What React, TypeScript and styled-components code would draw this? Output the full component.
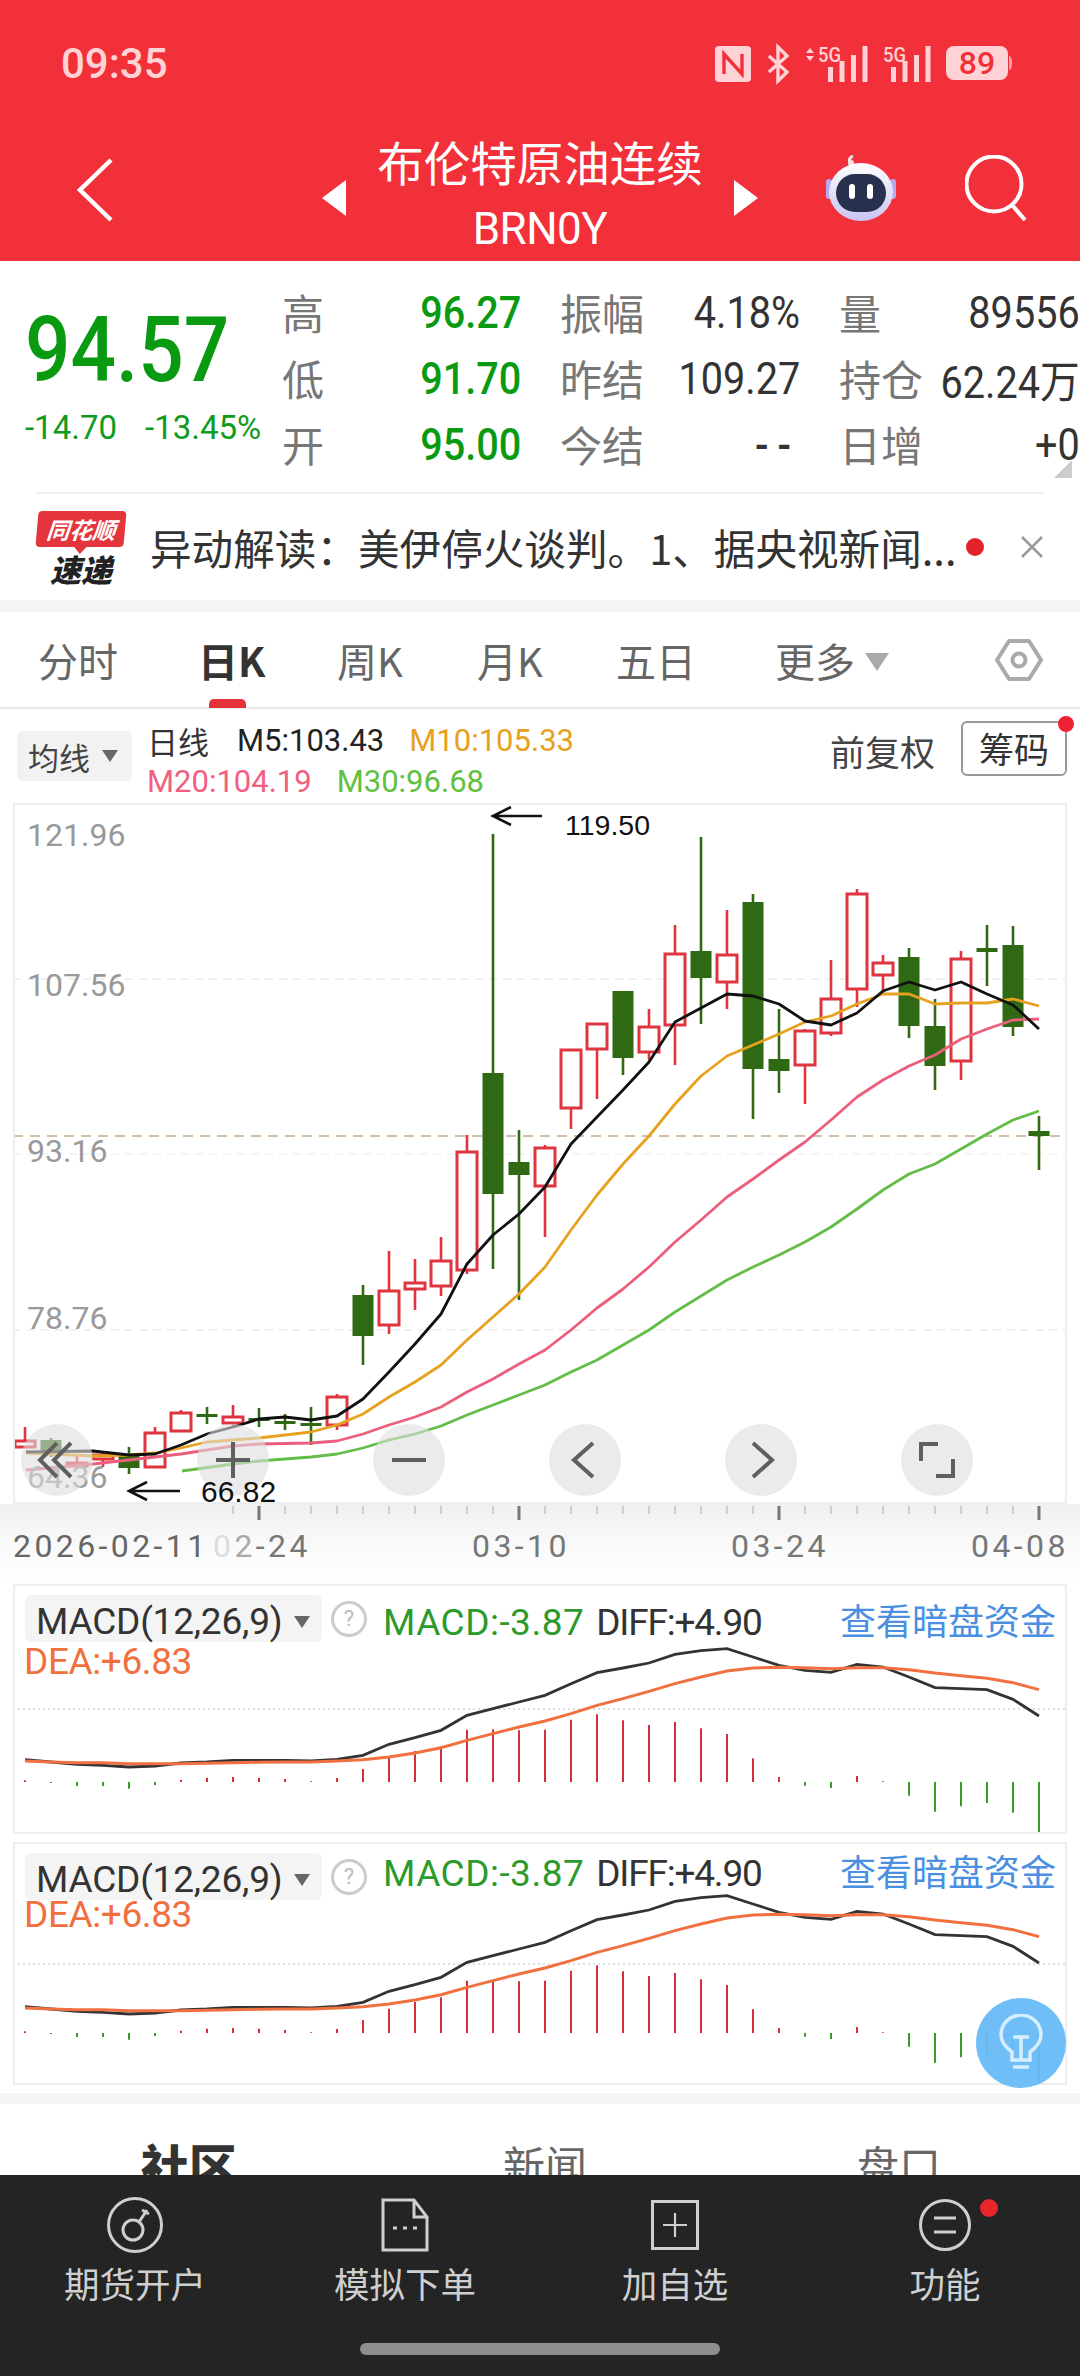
import React from "react";
import styled, { createGlobalStyle } from "styled-components";

const RED = "#f23039";
const FONT = `Roboto, "Noto Sans CJK SC", sans-serif`;
const CJK = `"Noto Sans CJK SC", Roboto, sans-serif`;

const GlobalStyle = createGlobalStyle`
  html, body {
    margin: 0;
    padding: 0;
    background: white;
  }
  * {
    box-sizing: border-box;
  }
`;

const Page = styled.div`
  width: 1080px;
  height: 2376px;
  overflow: hidden;
  display: flex;
  flex-direction: column;
  background: white;
  font-family: ${FONT};
  position: relative;
`;

const Scroller = styled.div`
  flex: 1 1 auto;
  overflow: hidden;
`;

/* ---------- red header ---------- */

const Header = styled.div`
  height: 264px;
  background: ${RED};
  display: flex;
  flex-direction: column;
`;

const StatusBar = styled.div`
  height: 126px;
  padding: 46px 68px 0 61px;
  display: flex;
  align-items: flex-start;
`;

const Clock = styled.div`
  font-size: 42px;
  font-weight: 500;
  line-height: 36px;
  color: #ffd3d5;
  flex: 1;
`;

const StatusIcons = styled.div`
  display: flex;
  align-items: flex-start;
  svg {
    overflow: visible;
  }
`;

const NavBar = styled.div`
  flex: 1;
  display: flex;
  position: relative;
  align-items: flex-start;
`;

const BackIcon = styled.svg`
  margin: 32px 0 0 76px;
  width: 38px;
  height: 64px;
`;

const TitleBlock = styled.div`
  position: absolute;
  left: 322px;
  width: 436px;
  top: 10px;
  display: flex;
  align-items: center;
  justify-content: space-between;
`;

const TitleText = styled.div`
  text-align: center;
  color: white;
  display: flex;
  flex-direction: column;
  align-items: center;
`;

const TitleName = styled.div`
  font-family: ${CJK};
  font-size: 46.5px;
  line-height: 50px;
`;

const TitleCode = styled.div`
  font-size: 44px;
  line-height: 50px;
  margin-top: 18px;
  letter-spacing: -0.5px;
`;

const TitleArrow = styled.div<{ $dir: "left" | "right" }>`
  width: 0;
  height: 0;
  margin-top: 6px;
  border-top: 18px solid transparent;
  border-bottom: 18px solid transparent;
  ${(p) => (p.$dir === "left" ? "border-right: 24px solid white;" : "border-left: 24px solid white;")}
`;

const NavRight = styled.div`
  margin-left: auto;
  padding: 29px 53px 0 0;
  display: flex;
  align-items: flex-start;
  gap: 68px;
`;

/* ---------- quote block ---------- */

const Quote = styled.div`
  height: 231px;
  padding-top: 17px;
  display: flex;
  position: relative;
`;

const PriceCol = styled.div`
  width: 282px;
  padding-left: 25px;
`;

const MainPrice = styled.div`
  font-size: 90px;
  font-weight: 500;
  line-height: 100px;
  margin-top: 23px;
  transform: scaleX(0.89);
  transform-origin: left center;
  color: #0a9a12;
`;

const PriceChange = styled.div`
  display: flex;
  gap: 28px;
  margin-top: 7px;
  font-size: 33px;
  line-height: 40px;
  color: #109a20;
`;

const StatGrid = styled.div`
  display: grid;
  grid-template-columns: 239px 240px 241px;
  grid-auto-rows: 66px;
  column-gap: 39px;
  flex: 1;
`;

const Stat = styled.div`
  display: flex;
  align-items: center;
  justify-content: space-between;
`;

const StatLabel = styled.span`
  font-family: ${CJK};
  font-size: 42px;
  color: #777;
  white-space: nowrap;
`;

const StatValue = styled.span<{ $green?: boolean; $empty?: boolean }>`
  display: inline-block;
  padding-top: 3px;
  font-size: 44px;
  font-weight: ${(p) => (p.$green || p.$empty ? 500 : 400)};
  letter-spacing: ${(p) => (p.$empty ? 10 : 0)}px;
  transform: scaleX(0.9);
  transform-origin: right center;
  color: ${(p) => (p.$green ? "#0a9a12" : "#333")};
  white-space: nowrap;
`;

const CornerMark = styled.div`
  position: absolute;
  right: 8px;
  top: 199px;
  width: 0;
  height: 0;
  border-left: 18px solid transparent;
  border-bottom: 18px solid #ccc;
`;

/* ---------- news ticker ---------- */

const NewsRow = styled.div`
  height: 108px;
  margin: 0 36px;
  border-top: 2px solid #efefef;
  display: flex;
  align-items: center;
`;

const Logo = styled.div`
  width: 90px;
  display: flex;
  flex-direction: column;
  align-items: center;
  margin-top: 0;
`;

const LogoBadge = styled.div`
  width: 88px;
  height: 36px;
  background: #e5353c;
  border-radius: 4px;
  transform: skewX(-5deg);
  color: white;
  font-family: ${CJK};
  font-size: 23px;
  font-weight: 700;
  font-style: italic;
  line-height: 36px;
  text-align: center;
  position: relative;
  &::after {
    content: "";
    position: absolute;
    left: 38px;
    bottom: -7px;
    border-left: 7px solid transparent;
    border-right: 7px solid transparent;
    border-top: 8px solid #e5353c;
  }
`;

const LogoText = styled.div`
  font-family: ${CJK};
  font-size: 31px;
  line-height: 30px;
  font-weight: 900;
  font-style: italic;
  color: #222;
  margin-top: 7px;
`;

const NewsText = styled.div`
  margin-left: 24px;
  width: 804px;
  font-family: ${CJK};
  font-size: 41.6px;
  color: #333;
  white-space: nowrap;
`;

const NewsDot = styled.div`
  width: 18px;
  height: 18px;
  border-radius: 50%;
  background: #e5222c;
  margin-left: 12px;
`;

const NewsClose = styled.svg`
  width: 24px;
  height: 24px;
  margin-left: 36px;
`;

const Band = styled.div<{ $height: number; $top?: number }>`
  height: ${(p) => p.$height}px;
  margin-top: ${(p) => p.$top || 0}px;
  background: #f5f5f5;
`;

/* ---------- period tabs ---------- */

const PeriodTabs = styled.div`
  height: 97px;
  border-bottom: 2px solid #e8e8e8;
  position: relative;
  display: flex;
  padding-left: 38px;
`;

const PeriodTab = styled.div<{ $active?: boolean; $width: number }>`
  width: ${(p) => p.$width}px;
  height: 96px;
  font-family: ${CJK};
  font-size: 40px;
  line-height: 96px;
  color: ${(p) => (p.$active ? "#333" : "#666")};
  font-weight: ${(p) => (p.$active ? 700 : 400)};
  position: relative;
  white-space: nowrap;
`;

const TabLine = styled.div`
  position: absolute;
  left: 11px;
  bottom: 0;
  width: 37px;
  height: 9px;
  border-radius: 5px 5px 0 0;
  background: #e5323a;
`;

const MoreArrow = styled.span`
  display: inline-block;
  margin-left: 10px;
  vertical-align: 6px;
  border-left: 12px solid transparent;
  border-right: 12px solid transparent;
  border-top: 18px solid #aaa;
`;

const SettingIcon = styled.svg`
  position: absolute;
  right: 37px;
  top: 26px;
  width: 48px;
  height: 44px;
`;

/* ---------- MA legend ---------- */

const LegendRow = styled.div`
  height: 94px;
  position: relative;
  display: flex;
  padding-left: 17px;
  align-items: flex-start;
`;

const SelectBox = styled.div`
  width: 115px;
  height: 50px;
  margin-top: 22px;
  background: #f2f2f2;
  border-radius: 6px;
  padding-left: 11px;
  display: flex;
  align-items: center;
  font-family: ${CJK};
  font-size: 31px;
  color: #444;
`;

const SmallArrow = styled.span<{ $color?: string }>`
  display: inline-block;
  margin-left: 12px;
  border-left: 8px solid transparent;
  border-right: 8px solid transparent;
  border-top: 12px solid ${(p) => p.$color || "#666"};
`;

const LegendLines = styled.div`
  margin-left: 15px;
  display: flex;
  flex-direction: column;
`;

const LegendLine = styled.div`
  height: 41px;
  margin-top: 11px;
  display: flex;
  align-items: center;
  gap: 25px;
  & + & {
    margin-top: 0;
  }
`;

const LegendItem = styled.span<{ $color: string }>`
  font-size: 31px;
  letter-spacing: 0;
  color: ${(p) => p.$color};
  white-space: nowrap;
`;

const LegendCjk = styled.span`
  font-family: ${CJK};
  font-size: 31px;
  color: #333;
  margin-right: 3px;
`;

const AdjustLabel = styled.div`
  position: absolute;
  left: 830px;
  top: 17px;
  font-family: ${CJK};
  font-size: 35px;
  line-height: 50px;
  color: #444;
`;

const ChipButton = styled.div`
  position: absolute;
  left: 961px;
  top: 12px;
  width: 106px;
  height: 55px;
  border: 2px solid #999;
  border-radius: 6px;
  text-align: center;
  font-family: ${CJK};
  font-size: 35px;
  line-height: 50px;
  color: #333;
  &::after {
    content: "";
    position: absolute;
    right: -9px;
    top: -7px;
    width: 16px;
    height: 16px;
    border-radius: 50%;
    background: #ee2233;
  }
`;

/* ---------- K chart ---------- */

const ChartBox = styled.div`
  height: 701px;
  margin: 0 13px;
  border: 2px solid #eeeeee;
  position: relative;
  overflow: hidden;
`;

const ChartSvg = styled.svg`
  position: absolute;
  left: -2px;
  top: -2px;
  width: 1054px;
  height: 701px;
`;

const PriceLabel = styled.div<{ $top: number }>`
  position: absolute;
  left: 12px;
  top: ${(p) => p.$top}px;
  font-size: 32px;
  line-height: 40px;
  color: #999;
`;

const ExtremeLabel = styled.div<{ $top: number; $left: number }>`
  position: absolute;
  left: ${(p) => p.$left}px;
  top: ${(p) => p.$top}px;
  font-family: "Liberation Sans", sans-serif;
  font-size: ${(p) => (p.$top < 100 ? 28.5 : 30)}px;
  line-height: 36px;
  color: #111;
`;

const ZoomRow = styled.div`
  position: absolute;
  left: 6px;
  top: 619px;
  display: flex;
  gap: 104px;
`;

const ZoomButton = styled.div`
  width: 72px;
  height: 72px;
  border-radius: 50%;
  background: rgba(222, 222, 222, 0.6);
  display: flex;
  align-items: center;
  justify-content: center;
`;

const AxisStrip = styled.div`
  height: 80px;
  position: relative;
  background: linear-gradient(180deg, #f0f0f0 0%, #fbfbfb 60%, #ffffff 100%);
`;

const TickSvg = styled.svg`
  position: absolute;
  left: 0;
  top: 0;
  width: 1080px;
  height: 20px;
`;

const DateLabel = styled.div<{ $left: number; $color?: string }>`
  position: absolute;
  left: ${(p) => p.$left}px;
  top: 22px;
  font-size: 32px;
  line-height: 40px;
  letter-spacing: 3.4px;
  color: ${(p) => p.$color || "#777"};
  white-space: nowrap;
`;

const FadedDigit = styled.span<{ $color: string }>`
  color: ${(p) => p.$color};
`;

/* ---------- MACD panels ---------- */

const MacdBox = styled.div<{ $height: number }>`
  height: ${(p) => p.$height}px;
  margin: 0 13px 8px;
  border: 2px solid #eeeeee;
  position: relative;
  overflow: hidden;
`;

const MacdSvg = styled.svg`
  position: absolute;
  left: -2px;
  top: -2px;
  width: 1054px;
`;

const MacdHead = styled.div`
  position: relative;
  display: flex;
  align-items: flex-start;
  padding: 9px 0 0 10px;
`;

const MacdSelect = styled.div`
  width: 297px;
  height: 47px;
  background: #f4f4f4;
  border-radius: 6px;
  padding: 6px 0 0 11px;
  display: flex;
  align-items: center;
  font-size: 37px;
  letter-spacing: -0.2px;
  color: #333;
  white-space: nowrap;
`;

const HelpCircle = styled.div`
  width: 36px;
  height: 36px;
  margin: 6px 0 0 9px;
  border: 3px solid #ccc;
  border-radius: 50%;
  text-align: center;
  font-size: 22px;
  line-height: 30px;
  color: #bbb;
  flex: none;
`;

const MacdValues = styled.div<{ $raise: number }>`
  display: flex;
  gap: 12px;
  margin: ${(p) => 6 - p.$raise}px 0 0 16px;
  font-size: 37px;
  line-height: 44px;
  white-space: nowrap;
`;

const MacdValue = styled.span<{ $color: string; $spacing: number }>`
  color: ${(p) => p.$color};
  letter-spacing: ${(p) => p.$spacing}px;
`;

const DarkPoolLink = styled.div<{ $raise: number }>`
  position: absolute;
  right: 9px;
  top: ${(p) => 8 - p.$raise}px;
  font-family: ${CJK};
  font-size: 36px;
  line-height: 50px;
  color: #4a8fe0;
  white-space: nowrap;
`;

const DeaLabel = styled.div<{ $top: number }>`
  position: absolute;
  left: 9px;
  top: ${(p) => p.$top}px;
  font-size: 37px;
  line-height: 44px;
  letter-spacing: -0.4px;
  color: #f0703f;
`;

const LampButton = styled.div`
  position: absolute;
  left: 976px;
  top: 1998px;
  width: 90px;
  height: 90px;
  border-radius: 50%;
  background: rgba(104, 186, 248, 0.95);
  display: flex;
  align-items: center;
  justify-content: center;
`;

/* ---------- section tabs + footer ---------- */

const SectionTabs = styled.div`
  display: grid;
  grid-template-columns: 362px 354px 345px;
  padding-top: 30px;
  padding-left: 141px;
`;

const SectionTab = styled.div<{ $active?: boolean }>`
  font-family: ${CJK};
  font-size: ${(p) => (p.$active ? 48 : 42)}px;
  line-height: 60px;
  font-weight: ${(p) => (p.$active ? 900 : 400)};
  color: ${(p) => (p.$active ? "#333" : "#666")};
`;

const Footer = styled.div`
  height: 201px;
  flex: none;
  background: #242424;
  display: flex;
  flex-direction: column;
  align-items: center;
  padding-top: 22px;
`;

const FooterItems = styled.div`
  width: 100%;
  display: grid;
  grid-template-columns: repeat(4, 1fr);
`;

const FooterItem = styled.div`
  display: flex;
  flex-direction: column;
  align-items: center;
  position: relative;
`;

const FooterIconBox = styled.div`
  height: 56px;
  display: flex;
  align-items: center;
`;

const FooterLabel = styled.div`
  margin-top: 10px;
  font-family: ${CJK};
  font-size: 35.5px;
  line-height: 40px;
  color: #cfcfcf;
`;

const RedDot = styled.div`
  position: absolute;
  left: 170px;
  top: 2px;
  width: 18px;
  height: 18px;
  border-radius: 50%;
  background: #e8242c;
`;

const HomeIndicator = styled.div`
  margin-top: 40px;
  width: 360px;
  height: 12px;
  border-radius: 6px;
  background: #8e8e8e;
`;

/* ---------- chart data ---------- */

// wickTop, bodyTop, bodyBottom, wickBottom, colour (page y coordinates)
type Candle = [number, number, number, number, "r" | "g"];

const CANDLES: Candle[] = [
  [1430, 1443, 1451, 1451, "r"],
  [1441, 1443, 1457, 1460, "g"],
  [1458, 1465, 1470, 1472, "r"],
  [1455, 1457, 1463, 1470, "r"],
  [1450, 1458, 1471, 1477, "g"],
  [1430, 1435, 1471, 1471, "r"],
  [1413, 1415, 1435, 1435, "r"],
  [1410, 1417, 1420, 1427, "g"],
  [1408, 1419, 1427, 1431, "r"],
  [1411, 1421, 1424, 1430, "g"],
  [1417, 1424, 1427, 1433, "g"],
  [1410, 1426, 1429, 1448, "g"],
  [1397, 1399, 1429, 1433, "r"],
  [1288, 1298, 1339, 1368, "g"],
  [1254, 1293, 1329, 1337, "r"],
  [1262, 1285, 1293, 1313, "r"],
  [1240, 1263, 1290, 1299, "r"],
  [1138, 1154, 1274, 1277, "r"],
  [837, 1076, 1197, 1272, "g"],
  [1133, 1165, 1178, 1303, "g"],
  [1148, 1150, 1190, 1240, "r"],
  [1052, 1052, 1112, 1132, "r"],
  [1026, 1026, 1053, 1102, "r"],
  [994, 994, 1061, 1078, "g"],
  [1012, 1029, 1056, 1063, "r"],
  [928, 956, 1029, 1068, "r"],
  [840, 954, 981, 1027, "g"],
  [913, 957, 986, 1012, "r"],
  [897, 905, 1072, 1122, "g"],
  [1012, 1062, 1074, 1096, "g"],
  [1032, 1033, 1069, 1107, "r"],
  [963, 1001, 1037, 1039, "r"],
  [892, 896, 993, 1010, "r"],
  [958, 965, 979, 997, "r"],
  [951, 960, 1029, 1041, "g"],
  [1002, 1029, 1069, 1093, "g"],
  [954, 961, 1065, 1083, "r"],
  [928, 951, 955, 989, "g"],
  [929, 948, 1030, 1039, "g"],
  [1119, 1134, 1139, 1173, "g"],
];

const candleX = (i: number) => 25 + 26 * i;

const M5 = "26,1455 93,1454 129,1458 155,1457 181,1448 207,1437 233,1430 259,1422 285,1420 311,1423 337,1419 363,1402 389,1375 415,1347 441,1317 467,1267 493,1238 519,1217 545,1190 571,1147 597,1120 623,1093 649,1065 675,1025 701,1011 727,997 753,999 779,1007 805,1024 831,1028 857,1016 883,994 909,985 935,993 961,985 987,997 1013,1008 1039,1032";
const M10 = "26,1456 93,1459 129,1458 155,1456 181,1451 207,1445 233,1443 259,1441 285,1438 311,1435 337,1428 363,1417 389,1400 415,1385 441,1368 467,1343 493,1320 519,1297 545,1270 571,1233 597,1198 623,1167 649,1139 675,1107 701,1079 727,1059 753,1048 779,1037 805,1025 831,1019 857,1007 883,997 909,997 935,1007 961,1006 987,1006 1013,1002 1039,1009";
const M20 = "26,1473 93,1467 129,1463 181,1457 233,1449 259,1447 311,1446 337,1444 363,1437 389,1428 415,1420 441,1410 467,1395 493,1382 519,1367 545,1353 571,1333 597,1311 623,1292 649,1270 675,1245 701,1223 727,1200 753,1182 779,1163 805,1145 831,1123 857,1100 883,1083 909,1069 935,1058 961,1042 987,1032 1013,1023 1039,1022";
const M30 = "182,1474 233,1467 259,1464 311,1460 337,1457 363,1451 389,1443 415,1437 441,1429 467,1418 493,1408 519,1398 545,1388 571,1375 597,1363 623,1348 649,1333 675,1315 701,1299 727,1283 753,1270 779,1258 805,1245 831,1230 857,1212 883,1193 909,1177 935,1167 961,1152 987,1137 1013,1123 1039,1114";

// page y = 1570 + value / 3 on the first panel
const DIFF = [578, 585, 592, 595, 600, 597, 588, 585, 580, 580, 580, 582, 577, 565, 532, 512, 490, 445, 425, 405, 385, 350, 317, 303, 288, 262, 251, 245, 270, 295, 310, 316, 292, 300, 330, 362, 365, 368, 397, 447];
const DEA = [582, 585, 587, 587, 590, 590, 590, 589, 587, 586, 585, 585, 582, 578, 570, 558, 542, 520, 500, 480, 462, 440, 415, 395, 373, 350, 330, 312, 303, 301, 302, 305, 302, 302, 308, 318, 326, 334, 347, 368];
const HIST = [640, 648, 657, 657, 665, 654, 638, 632, 630, 632, 636, 643, 633, 606, 572, 552, 538, 488, 487, 490, 488, 458, 442, 460, 474, 465, 484, 501, 574, 630, 656, 663, 627, 643, 686, 734, 718, 708, 737, 800];
const HIST_ZERO = 645;

const macdPoints = (values: number[], offset: number) =>
  values.map((v, i) => `${candleX(i)},${1570 + v / 3 + offset}`).join(" ");

/* ---------- small drawings ---------- */

const NfcIcon = () => (
  <svg width="36" height="36" viewBox="0 0 36 36" style={{ marginRight: 15 }}>
    <rect width="36" height="36" rx="4" fill="#ffd3d5" />
    <path d="M9 28V8l18 20V8" fill="none" stroke={RED} strokeWidth="3.4" />
  </svg>
);

const BluetoothIcon = () => (
  <svg width="24" height="36" viewBox="0 0 24 36" style={{ marginRight: 16 }}>
    <path d="M3 10l18 16-9 9V1l9 9L3 26" fill="none" stroke="#ffd3d5" strokeWidth="3.4" />
  </svg>
);

const SignalIcon = ({ arrows, width }: { arrows?: boolean; width: number }) => {
  const left = width - 40;
  return (
    <svg width={width} height="36" viewBox={`0 0 ${width} 36`} style={{ marginRight: 15 }}>
      {arrows && <path d="M0 7l4-5 4 5zM0 10l4 5 4-5z" fill="#ffd3d5" />}
      <text x={arrows ? 12 : 0} y="16" fontFamily="Roboto, sans-serif" fontSize="20" fontWeight="500" textLength="23" lengthAdjust="spacingAndGlyphs" fill="#ffd3d5">
        5G
      </text>
      {[21, 15, 9, 0].map((y, i) => (
        <rect key={i} x={left + i * 11.5} y={y} width="5" height={36 - y} fill="#ffd3d5" />
      ))}
    </svg>
  );
};

const BatteryIcon = () => (
  <svg width="66" height="35" viewBox="0 0 66 35">
    <rect width="62" height="34" rx="8" fill="#ffd3d5" />
    <path d="M63 10c2 0 3 2 3 7s-1 7-3 7z" fill="#ffd3d5" opacity="0.7" />
    <text x="31" y="28" textAnchor="middle" fontFamily="Roboto, sans-serif" fontSize="32" fontWeight="500" fill={RED}>
      89
    </text>
  </svg>
);

const RobotIcon = () => (
  <svg width="72" height="66" viewBox="0 0 72 66">
    <defs>
      <linearGradient id="robotShell" x1="0" y1="0" x2="0" y2="1">
        <stop offset="0" stopColor="#ffffff" />
        <stop offset="1" stopColor="#c9c4f2" />
      </linearGradient>
    </defs>
    <path d="M26 8c-3-2-1-7 2-6" fill="none" stroke="#f4e4e4" strokeWidth="3" />
    <circle cx="26" cy="8" r="3" fill="#f4e4e4" />
    <rect x="1" y="24" width="6" height="20" rx="3" fill="#b6a9ee" />
    <rect x="65" y="24" width="6" height="20" rx="3" fill="#b6a9ee" />
    <ellipse cx="36" cy="37" rx="32" ry="29" fill="url(#robotShell)" />
    <rect x="11" y="19" width="50" height="38" rx="19" fill="#27304c" />
    <rect x="24" y="29" width="6" height="15" rx="3" fill="white" />
    <rect x="42" y="29" width="6" height="15" rx="3" fill="white" />
  </svg>
);

const SearchIcon = () => (
  <svg width="62" height="66" viewBox="0 0 62 66">
    <circle cx="29" cy="29" r="27.5" fill="none" stroke="white" strokeWidth="4" />
    <path d="M47 50l13 15" fill="none" stroke="white" strokeWidth="4" />
  </svg>
);

const ZoomGlyph = ({ d }: { d: string }) => (
  <svg width="40" height="40" viewBox="0 0 40 40">
    <path d={d} fill="none" stroke="#5f5f5f" strokeWidth="4" />
  </svg>
);

const Candles = () => (
  <g>
    {CANDLES.map(([wt, bt, bb, wb, c], i) => {
      const x = candleX(i);
      const color = c === "r" ? "#df3540" : "#2f6914";
      return (
        <g key={i}>
          <line x1={x} x2={x} y1={wt} y2={bt} stroke={color} strokeWidth="2.6" />
          <line x1={x} x2={x} y1={bb} y2={wb} stroke={color} strokeWidth="2.6" />
          {c === "r" ? (
            <rect x={x - 10} y={bt + 1} width="20" height={Math.max(bb - bt - 2, 2)} fill="white" stroke={color} strokeWidth="3" />
          ) : (
            <rect x={x - 10.5} y={bt} width="21" height={bb - bt} fill={color} />
          )}
        </g>
      );
    })}
  </g>
);

const MaLine = ({ points, color }: { points: string; color: string }) => (
  <polyline points={points} fill="none" stroke={color} strokeWidth="2.8" strokeLinejoin="round" />
);

const MacdPanel = ({
  height,
  lineOffset,
  histZero,
  dotted,
  top,
  raise,
  deaTop,
}: {
  height: number;
  lineOffset: number;
  histZero: number;
  dotted: number;
  top: number;
  raise: number;
  deaTop: number;
}) => (
  <MacdBox $height={height}>
    <MacdSvg height={height} viewBox={`13 ${top} 1054 ${height}`}>
      <line x1="13" x2="1067" y1={dotted} y2={dotted} stroke="#dddddd" strokeWidth="2" strokeDasharray="2 3" />
      {HIST.map((v, i) => (
        <line
          key={i}
          x1={candleX(i)}
          x2={candleX(i)}
          y1={histZero + (v - HIST_ZERO) / 3}
          y2={histZero}
          stroke={v < HIST_ZERO ? "#d5303a" : "#3a9a2a"}
          strokeWidth="2"
        />
      ))}
      <polyline points={macdPoints(DIFF, lineOffset)} fill="none" stroke="#333" strokeWidth="2.8" />
      <polyline points={macdPoints(DEA, lineOffset)} fill="none" stroke="#f0703f" strokeWidth="3" />
    </MacdSvg>
    <MacdHead>
      <MacdSelect>
        MACD(12,26,9)
        <SmallArrow />
      </MacdSelect>
      <HelpCircle>?</HelpCircle>
      <MacdValues $raise={raise}>
        <MacdValue $color="#2c9a2c" $spacing={0.5}>MACD:-3.87</MacdValue>
        <MacdValue $color="#333" $spacing={-1.2}>DIFF:+4.90</MacdValue>
      </MacdValues>
      <DarkPoolLink $raise={raise}>查看暗盘资金</DarkPoolLink>
    </MacdHead>
    <DeaLabel $top={deaTop}>DEA:+6.83</DeaLabel>
  </MacdBox>
);

const STATS: [string, string, boolean?][] = [
  ["高", "96.27", true],
  ["振幅", "4.18%"],
  ["量", "89556"],
  ["低", "91.70", true],
  ["昨结", "109.27"],
  ["持仓", "62.24万"],
  ["开", "95.00", true],
  ["今结", "--"],
  ["日增", "+0"],
];

const TICKS = Array.from({ length: 32 }, (_, n) => n + 8);

const App = () => {
  return (
    <Page>
      <GlobalStyle />
      <Header>
        <StatusBar>
          <Clock>09:35</Clock>
          <StatusIcons>
            <NfcIcon />
            <BluetoothIcon />
            <SignalIcon arrows width={62} />
            <SignalIcon width={48} />
            <BatteryIcon />
          </StatusIcons>
        </StatusBar>
        <NavBar>
          <BackIcon viewBox="0 0 38 64">
            <path d="M35 2L4 32l31 30" fill="none" stroke="white" strokeWidth="4.5" />
          </BackIcon>
          <TitleBlock>
            <TitleArrow $dir="left" />
            <TitleText>
              <TitleName>布伦特原油连续</TitleName>
              <TitleCode>BRN0Y</TitleCode>
            </TitleText>
            <TitleArrow $dir="right" />
          </TitleBlock>
          <NavRight>
            <RobotIcon />
            <SearchIcon />
          </NavRight>
        </NavBar>
      </Header>

      <Scroller>
        <Quote>
          <PriceCol>
            <MainPrice>94.57</MainPrice>
            <PriceChange>
              <span>-14.70</span>
              <span>-13.45%</span>
            </PriceChange>
          </PriceCol>
          <StatGrid>
            {STATS.map(([label, value, green]) => (
              <Stat key={label}>
                <StatLabel>{label}</StatLabel>
                <StatValue $green={green} $empty={value === "--"}>
                  {value}
                </StatValue>
              </Stat>
            ))}
          </StatGrid>
          <CornerMark />
        </Quote>

        <NewsRow>
          <Logo>
            <LogoBadge>同花顺</LogoBadge>
            <LogoText>速递</LogoText>
          </Logo>
          <NewsText>异动解读：美伊停火谈判。1、据央视新闻...</NewsText>
          <NewsDot />
          <NewsClose viewBox="0 0 24 24">
            <path d="M2 2l20 20M22 2L2 22" stroke="#999" strokeWidth="2.5" />
          </NewsClose>
        </NewsRow>
        <Band $height={12} />

        <PeriodTabs>
          <PeriodTab $width={160}>分时</PeriodTab>
          <PeriodTab $width={139} $active>
            日K
            <TabLine />
          </PeriodTab>
          <PeriodTab $width={140}>周K</PeriodTab>
          <PeriodTab $width={139}>月K</PeriodTab>
          <PeriodTab $width={159}>五日</PeriodTab>
          <PeriodTab $width={120}>
            更多
            <MoreArrow />
          </PeriodTab>
          <SettingIcon viewBox="0 0 48 44">
            <path d="M14 3h20l12 19-12 19H14L2 22z" fill="none" stroke="#aaa" strokeWidth="4" strokeLinejoin="round" />
            <circle cx="24" cy="22" r="6.500" fill="none" stroke="#aaa" strokeWidth="4" />
          </SettingIcon>
        </PeriodTabs>

        <LegendRow>
          <SelectBox>
            均线
            <SmallArrow />
          </SelectBox>
          <LegendLines>
            <LegendLine>
              <LegendCjk>日线</LegendCjk>
              <LegendItem $color="#222">M5:103.43</LegendItem>
              <LegendItem $color="#e8a020">M10:105.33</LegendItem>
            </LegendLine>
            <LegendLine>
              <LegendItem $color="#f06080">M20:104.19</LegendItem>
              <LegendItem $color="#60c040">M30:96.68</LegendItem>
            </LegendLine>
          </LegendLines>
          <AdjustLabel>前复权</AdjustLabel>
          <ChipButton>筹码</ChipButton>
        </LegendRow>

        <ChartBox>
          <ChartSvg viewBox="13 806 1054 701">
            <line x1="13" x2="1067" y1="982" y2="982" stroke="#e2e2e2" strokeWidth="1.2" strokeDasharray="8 6" />
            <line x1="13" x2="1067" y1="1157" y2="1157" stroke="#ebebeb" strokeWidth="1.2" strokeDasharray="8 6" />
            <line x1="13" x2="1067" y1="1333" y2="1333" stroke="#e2e2e2" strokeWidth="1.2" strokeDasharray="8 6" />
            <line x1="13" x2="1067" y1="1139" y2="1139" stroke="#c4ab88" strokeWidth="1.6" strokeDasharray="10 7" />
            <Candles />
            <MaLine points={M30} color="#63bd48" />
            <MaLine points={M20} color="#ec5f7c" />
            <MaLine points={M10} color="#e6a21e" />
            <MaLine points={M5} color="#111111" />
            <path d="M542 819H494M511 810l-18 9 18 9" fill="none" stroke="#111" strokeWidth="2.6" />
            <path d="M180 1494H130M147 1485l-18 9 18 9" fill="none" stroke="#111" strokeWidth="2.6" />
          </ChartSvg>
          <PriceLabel $top={10}>121.96</PriceLabel>
          <PriceLabel $top={160}>107.56</PriceLabel>
          <PriceLabel $top={326}>93.16</PriceLabel>
          <PriceLabel $top={493}>78.76</PriceLabel>
          <PriceLabel $top={652}>64.36</PriceLabel>
          <ZoomRow>
            <ZoomButton>
              <ZoomGlyph d="M20 3L3 20l17 17M34 3L17 20l17 17" />
            </ZoomButton>
            <ZoomButton>
              <ZoomGlyph d="M20 2v36M3 20h34" />
            </ZoomButton>
            <ZoomButton>
              <ZoomGlyph d="M3 20h34" />
            </ZoomButton>
            <ZoomButton>
              <ZoomGlyph d="M28 3L9 20l19 17" />
            </ZoomButton>
            <ZoomButton>
              <ZoomGlyph d="M12 3l19 17-19 17" />
            </ZoomButton>
            <ZoomButton>
              <ZoomGlyph d="M21 4H4v17M19 36h17V19" />
            </ZoomButton>
          </ZoomRow>
          <ExtremeLabel $left={550} $top={2}>119.50</ExtremeLabel>
          <ExtremeLabel $left={186} $top={669}>66.82</ExtremeLabel>
        </ChartBox>

        <AxisStrip>
          <TickSvg viewBox="0 0 1080 20">
            {TICKS.map((i) =>
              (i - 9) % 10 === 0 ? (
                <line key={i} x1={candleX(i)} x2={candleX(i)} y1="2" y2="16" stroke="#777" strokeWidth="3" />
              ) : (
                <line key={i} x1={candleX(i)} x2={candleX(i)} y1="2" y2="10" stroke="#aaa" strokeWidth="1" />
              )
            )}
          </TickSvg>
          <DateLabel $left={13} $color="#666">2026-02-11</DateLabel>
          <DateLabel $left={213}>
            <FadedDigit $color="#ddd">0</FadedDigit>
            <FadedDigit $color="#aaa">2</FadedDigit>-24
          </DateLabel>
          <DateLabel $left={472}>03-10</DateLabel>
          <DateLabel $left={731}>03-24</DateLabel>
          <DateLabel $left={971}>04-08</DateLabel>
        </AxisStrip>

        <MacdPanel height={250} top={1587} lineOffset={0} histZero={1785} dotted={1712} raise={0} deaTop={54} />
        <MacdPanel height={243} top={1845} lineOffset={247} histZero={2036} dotted={1967} raise={7} deaTop={49} />
        <LampButton>
          <svg width="44" height="58" viewBox="0 0 44 58">
            <path
              d="M13 38C5 32 2 26 2 21a20 20 0 0 1 40 0c0 5-3 11-11 17v8H13z"
              fill="none"
              stroke="#d6eeff"
              strokeWidth="3.500"
            />
            <path d="M14 23h16M22 23v23M14 53h16" fill="none" stroke="#d6eeff" strokeWidth="3.500" />
          </svg>
        </LampButton>
        <Band $height={11} $top={0} />
        <SectionTabs>
          <SectionTab $active>社区</SectionTab>
          <SectionTab>新闻</SectionTab>
          <SectionTab>盘口</SectionTab>
        </SectionTabs>
      </Scroller>

      <Footer>
        <FooterItems>
          <FooterItem>
            <FooterIconBox>
              <svg width="56" height="56" viewBox="0 0 56 56" fill="none" stroke="#cfcfcf" strokeWidth="3">
                <circle cx="28" cy="28" r="26.500" />
                <circle cx="26" cy="33" r="10" />
                <path d="M32 25l8-12M35 13l7 4" />
              </svg>
            </FooterIconBox>
            <FooterLabel>期货开户</FooterLabel>
          </FooterItem>
          <FooterItem>
            <FooterIconBox>
              <svg width="48" height="54" viewBox="0 0 48 54" fill="none" stroke="#cfcfcf" strokeWidth="3">
                <path d="M2 2h31l13 17v33H2zM33 2v17h13" />
                <path d="M12 30h4M22 30h4M32 30h4" />
              </svg>
            </FooterIconBox>
            <FooterLabel>模拟下单</FooterLabel>
          </FooterItem>
          <FooterItem>
            <FooterIconBox>
              <svg width="48" height="50" viewBox="0 0 48 50" fill="none" stroke="#cfcfcf" strokeWidth="3">
                <rect x="1.500" y="1.500" width="45" height="47" />
                <path d="M24 13v24M12 25h24" strokeWidth="2.200" />
              </svg>
            </FooterIconBox>
            <FooterLabel>加自选</FooterLabel>
          </FooterItem>
          <FooterItem>
            <FooterIconBox>
              <svg width="52" height="52" viewBox="0 0 52 52" fill="none" stroke="#cfcfcf" strokeWidth="3">
                <circle cx="26" cy="26" r="24.500" />
                <path d="M15 19h22M15 33h22" />
              </svg>
            </FooterIconBox>
            <FooterLabel>功能</FooterLabel>
            <RedDot />
          </FooterItem>
        </FooterItems>
        <HomeIndicator />
      </Footer>
    </Page>
  );
};

export default App;
